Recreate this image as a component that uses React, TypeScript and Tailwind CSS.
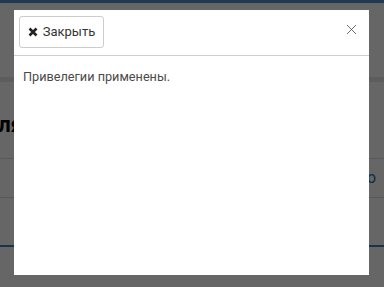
import { X } from "lucide-react"

function Backdrop () {
    return(
        <div className="flex flex-col h-[287px] bg-white">
            <div className="h-[3px] bg-[#4e8fd0]"></div>
            <div className="h-[74px]"></div>
            <div className="h-[5px] bg-[#e8e8e8]"></div>
            <div className="h-[30px]"></div>
            <div className="w-[23px] flex justify-end">
                <p className="text-[22px] font-bold leading-[26px] text-black whitespace-nowrap">Права пользователя</p>
            </div>
            <div className="h-[20px]"></div>
            <div className="h-px bg-[#dcdcdc]"></div>
            <div className="h-[38px] flex justify-end items-center pr-[8px] text-[#2a6fb5]">o</div>
            <div className="h-px bg-[#dcdcdc]"></div>
            <div className="h-[47px]"></div>
            <div className="h-[2px] bg-[#3f80c0]"></div>
        </div>
    )
}

export default function App () {
    return(
        <div className="relative w-[384px] h-[287px] overflow-hidden" style={{fontFamily:"Roboto, 'Liberation Sans', sans-serif"}}>
            <Backdrop/>
            <div className="absolute inset-0 bg-black/60">
                <div className="ml-[14px] mt-[10px] w-[355px] h-[265px] bg-white flex flex-col">
                    <div className="h-[46px] flex items-start justify-between border-b border-[#cfcfcf] pl-[5px] pr-[9px] pt-[6px]">
                        <button className="h-[32px] w-[85px] flex items-center justify-center gap-[5px] border border-[#cccccc] rounded-[3px] text-[13px] text-[#333]">
                            <svg width="10" height="10" viewBox="0 0 10 10"><path d="M1.5 1.5L8.5 8.5M8.5 1.5L1.5 8.5" stroke="#222" strokeWidth="2.6"/></svg>
                            Закрыть
                        </button>
                        <X className="mt-[5px] text-[#444]" size={17} strokeWidth={1.1}/>
                    </div>
                    <p className="px-[9px] pt-[11px] text-[12.7px] text-[#4a4a4a]">Привелегии применены.</p>
                </div>
            </div>
        </div>
    )
}
